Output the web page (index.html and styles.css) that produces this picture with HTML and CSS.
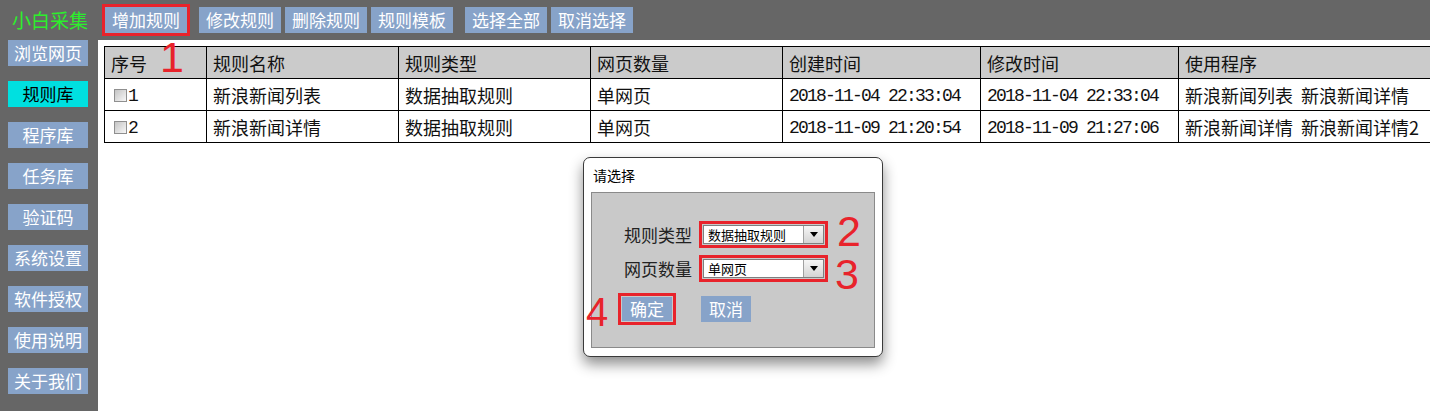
FILE: index.html
```html
<!DOCTYPE html>
<html lang="zh">
<head>
<meta charset="utf-8">
<title>小白采集 - 规则库</title>
<link rel="stylesheet" href="styles.css">
</head>
<body>
<div class="app">
  <header class="topbar">
    <div class="logo">小白采集</div>
    <nav class="toolbar">
      <span class="tb-btn hl-top">增加规则</span>
      <span class="tb-btn spaced">修改规则</span>
      <span class="tb-btn">删除规则</span>
      <span class="tb-btn">规则模板</span>
      <span class="tb-btn spaced">选择全部</span>
      <span class="tb-btn">取消选择</span>
    </nav>
  </header>
  <div class="main">
    <aside class="sidebar">
      <span class="side-btn">浏览网页</span>
      <span class="side-btn active">规则库</span>
      <span class="side-btn">程序库</span>
      <span class="side-btn">任务库</span>
      <span class="side-btn">验证码</span>
      <span class="side-btn">系统设置</span>
      <span class="side-btn">软件授权</span>
      <span class="side-btn">使用说明</span>
      <span class="side-btn">关于我们</span>
    </aside>
    <section class="content">
      <table class="grid">
        <colgroup>
          <col class="c-no"><col class="c-mid"><col class="c-mid"><col class="c-mid"><col class="c-time"><col class="c-time"><col class="c-last">
        </colgroup>
        <thead>
          <tr><th>序号</th><th>规则名称</th><th>规则类型</th><th>网页数量</th><th>创建时间</th><th>修改时间</th><th>使用程序</th></tr>
        </thead>
        <tbody>
          <tr>
            <td><span class="chk"></span><span class="mono">1</span></td>
            <td>新浪新闻列表</td><td>数据抽取规则</td><td>单网页</td>
            <td><span class="mono">2018-11-04 22:33:04</span></td>
            <td><span class="mono">2018-11-04 22:33:04</span></td>
            <td class="progs">新浪新闻列表 新浪新闻详情</td>
          </tr>
          <tr>
            <td><span class="chk"></span><span class="mono">2</span></td>
            <td>新浪新闻详情</td><td>数据抽取规则</td><td>单网页</td>
            <td><span class="mono">2018-11-09 21:20:54</span></td>
            <td><span class="mono">2018-11-09 21:27:06</span></td>
            <td class="progs">新浪新闻详情 新浪新闻详情2</td>
          </tr>
        </tbody>
      </table>
    </section>
  </div>

  <div class="dialog">
    <div class="dlg-title">请选择</div>
    <div class="dlg-panel">
      <div class="form-row">
        <span class="form-label">规则类型</span>
        <div class="select hl"><span class="select-text">数据抽取规则</span><span class="select-arrow"><i class="tri"></i></span></div>
      </div>
      <div class="form-row">
        <span class="form-label">网页数量</span>
        <div class="select hl"><span class="select-text">单网页</span><span class="select-arrow"><i class="tri"></i></span></div>
      </div>
      <div class="dlg-actions">
        <span class="dlg-btn hl">确定</span>
        <span class="dlg-btn cancel">取消</span>
      </div>
    </div>
  </div>

  <span class="mark mark-1">1</span>
  <span class="mark mark-2">2</span>
  <span class="mark mark-3">3</span>
  <span class="mark mark-4">4</span>
</div>
</body>
</html>
```

FILE: styles.css
```css
html, body {
  margin: 0;
  padding: 0;
  overflow: hidden;
}
body {
  font-family: "Noto Sans CJK SC", "Noto Sans", sans-serif;
  background: #666666;
}
.app {
  position: relative;
  width: 1430px;
  height: 411px;
  display: grid;
  grid-template-rows: 40px 1fr;
  overflow: hidden;
}

/* top bar */
.topbar {
  display: flex;
  align-items: center;
  background: #666666;
}
.logo {
  width: 98px;
  box-sizing: border-box;
  padding-left: 12px;
  color: #2cef2c;
  font-size: 19px;
  line-height: 20px;
  margin-top: -1px;
}
.toolbar {
  display: flex;
  align-items: center;
  gap: 4px;
  padding-left: 7px;
}
.tb-btn {
  display: block;
  height: 26px;
  line-height: 26px;
  padding: 0 7px;
  background: #87a3c9;
  color: #ffffff;
  font-size: 17px;
}
.tb-btn.spaced {
  margin-left: 8px;
}
.hl-top {
  outline: 3px solid #e8232b;
  outline-offset: 0;
}

/* layout below bar */
.main {
  display: grid;
  grid-template-columns: 98px 1fr;
  min-height: 0;
}
.sidebar {
  display: flex;
  flex-direction: column;
  gap: 15px;
  padding-left: 8px;
  background: #666666;
}
.side-btn {
  display: block;
  width: 80px;
  height: 26px;
  line-height: 26px;
  text-align: center;
  background: #87a3c9;
  color: #ffffff;
  font-size: 17px;
}
.side-btn.active {
  background: #00e0e0;
  color: #000000;
}
.content {
  background: #ffffff;
  padding: 6px;
  overflow: hidden;
  min-width: 0;
}

/* table */
.grid {
  border-collapse: collapse;
  table-layout: fixed;
  width: 1374px;
  font-size: 18px;
  color: #111111;
}
.c-no { width: 102px; }
.c-mid { width: 192px; }
.c-time { width: 198px; }
.c-last { width: 300px; }
.grid th,
.grid td {
  border: 1px solid #000000;
  height: 31px;
  padding: 0 6px;
  text-align: left;
  font-weight: normal;
  white-space: nowrap;
  overflow: hidden;
  line-height: 20px;
}
.grid thead tr {
  background: #cbcbcb;
}
.progs {
  word-spacing: 4px;
}
.mono {
  font-family: "Liberation Mono", monospace;
  font-size: 18px;
  letter-spacing: -1.8px;
}
.chk {
  display: inline-block;
  width: 11px;
  height: 11px;
  border: 1px solid #8f8f8f;
  background: linear-gradient(135deg, #c4c4c4, #f7f7f7);
  vertical-align: -1px;
  margin: 0 1px 0 3px;
}

/* dialog */
.dialog {
  position: absolute;
  left: 583px;
  top: 157px;
  width: 300px;
  height: 200px;
  box-sizing: border-box;
  background: #ffffff;
  border: 1px solid #3a3a3a;
  border-radius: 7px;
  box-shadow: 0 7px 14px rgba(0, 0, 0, 0.45);
}
.dlg-title {
  height: 34px;
  line-height: 34px;
  padding-left: 9px;
  font-size: 14px;
  color: #000000;
}
.dlg-panel {
  margin: 0 7px 0 7px;
  height: 156px;
  box-sizing: border-box;
  border: 1px solid #8a8a8a;
  background: #c9c9c9;
  padding-top: 32px;
}
.form-row {
  display: flex;
  align-items: center;
  height: 19px;
}
.form-row + .form-row {
  margin-top: 15px;
}
.form-label {
  width: 100px;
  margin-right: 11px;
  text-align: right;
  font-size: 17px;
  line-height: 19px;
  color: #222222;
}
.select {
  display: flex;
  width: 121px;
  height: 19px;
  box-sizing: border-box;
  border: 1px solid #7f7f7f;
  background: #ffffff;
  font-size: 13px;
  color: #000000;
}
.select-text {
  flex: 1;
  padding-left: 4px;
  line-height: 17px;
}
.select-arrow {
  width: 19px;
  display: flex;
  align-items: center;
  justify-content: center;
  background: linear-gradient(#f6f6f6, #d4d4d4);
  border-left: 1px solid #a0a0a0;
}
.tri {
  display: block;
  width: 0;
  height: 0;
  border-left: 4px solid transparent;
  border-right: 4px solid transparent;
  border-top: 5px solid #000000;
}
.hl {
  outline: 3px solid #e8232b;
  outline-offset: 1px;
}
.dlg-actions {
  display: flex;
  align-items: center;
  height: 26px;
  margin-top: 18px;
  padding-left: 30px;
  gap: 29px;
}
.dlg-btn {
  display: block;
  width: 50px;
  height: 24px;
  line-height: 24px;
  text-align: center;
  background: #87a3c9;
  color: #ffffff;
  font-size: 17px;
}
.dlg-btn.cancel {
  height: 26px;
  line-height: 26px;
}

/* red annotation numbers */
.mark {
  position: absolute;
  color: #e8232b;
  font-family: "Liberation Sans", Arial, sans-serif;
  font-size: 43px;
  line-height: 1;
}
.mark-1 { left: 160px; top: 36px; }
.mark-2 { left: 837px; top: 210px; }
.mark-3 { left: 835px; top: 253px; }
.mark-4 { left: 586px; top: 292px; font-size: 40px; }
```
